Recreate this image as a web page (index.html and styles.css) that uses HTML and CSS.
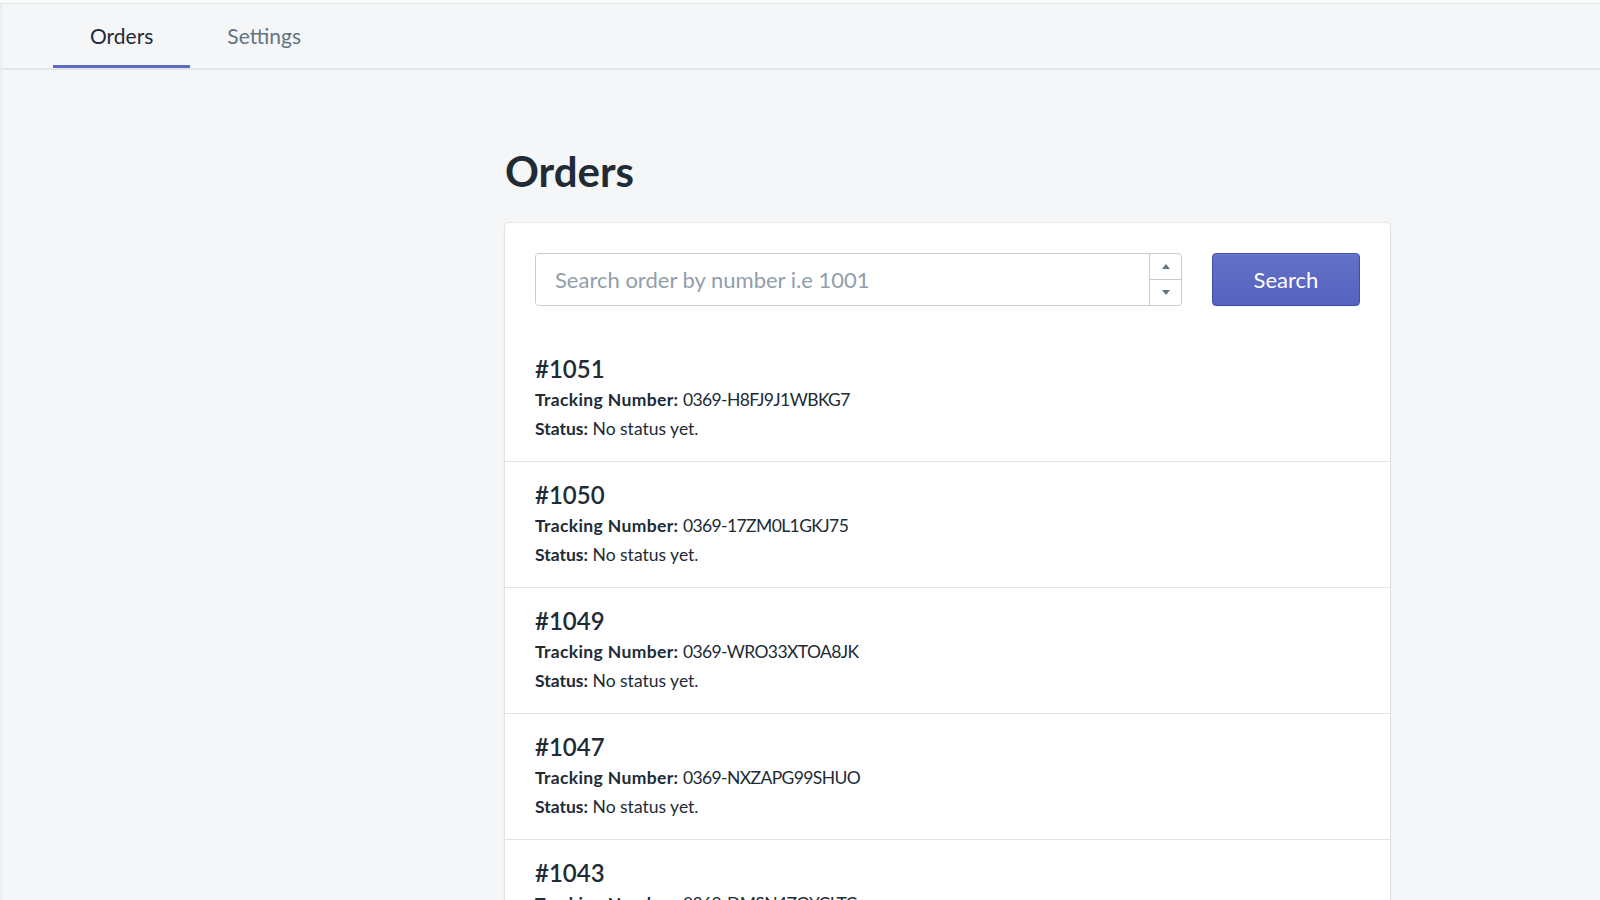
FILE: index.html
```html
<!DOCTYPE html>
<html lang="en">
<head>
<meta charset="utf-8">
<title>Orders</title>
<link rel="stylesheet" href="styles.css">
</head>
<body>
<div class="app">
  <nav class="tabs">
    <a class="tab tab-active">Orders</a>
    <a class="tab">Settings</a>
  </nav>
  <main class="page">
    <h1 class="page-title">Orders</h1>
    <section class="card">
      <div class="search-row">
        <div class="number-field">
          <input class="number-input" type="text" placeholder="Search order by number i.e 1001">
          <div class="spinner">
            <span class="spin-btn"><svg width="8" height="5" viewBox="0 0 8 5"><path d="M0 5 L4 0 L8 5 Z" fill="#637381"/></svg></span>
            <span class="spin-btn"><svg width="8" height="5" viewBox="0 0 8 5"><path d="M0 0 L4 5 L8 0 Z" fill="#637381"/></svg></span>
          </div>
        </div>
        <button class="btn-primary">Search</button>
      </div>
      <ul class="order-list">
        <li class="order">
          <div class="order-number">#1051</div>
          <div class="order-line"><b class="label-track">Tracking Number:</b> <span class="code">0369-H8FJ9J1WBKG7</span></div>
          <div class="order-line"><b>Status:</b> No status yet.</div>
        </li>
        <li class="order">
          <div class="order-number">#1050</div>
          <div class="order-line"><b class="label-track">Tracking Number:</b> <span class="code">0369-17ZM0L1GKJ75</span></div>
          <div class="order-line"><b>Status:</b> No status yet.</div>
        </li>
        <li class="order">
          <div class="order-number">#1049</div>
          <div class="order-line"><b class="label-track">Tracking Number:</b> <span class="code">0369-WRO33XTOA8JK</span></div>
          <div class="order-line"><b>Status:</b> No status yet.</div>
        </li>
        <li class="order">
          <div class="order-number">#1047</div>
          <div class="order-line"><b class="label-track">Tracking Number:</b> <span class="code">0369-NXZAPG99SHUO</span></div>
          <div class="order-line"><b>Status:</b> No status yet.</div>
        </li>
        <li class="order">
          <div class="order-number">#1043</div>
          <div class="order-line"><b class="label-track">Tracking Number:</b> <span class="code">0369-DMSN4ZOYCLTC</span></div>
          <div class="order-line"><b>Status:</b> No status yet.</div>
        </li>
      </ul>
    </section>
  </main>
</div>
</body>
</html>
```
FILE: styles.css
```css
* { box-sizing: border-box; }
html { background: #fafbfb; }
body {
  margin: 0;
  font-family: Lato, "Open Sans", sans-serif;
  color: #212b36;
  height: 900px;
  overflow: hidden;
}
.app {
  margin-top: 3px;
  border-top: 1px solid #e3e5e8;
  border-left: 2px solid #eceef0;
  background: #f4f6f8;
  min-height: 897px;
}
.tabs {
  display: flex;
  padding-left: 51px;
  height: 66px;
  border-bottom: 2px solid #e3e5e8;
}
.tab {
  display: block;
  height: 64px;
  line-height: 64px;
  padding: 0 37px;
  font-size: 21px;
  color: #637381;
  cursor: pointer;
}
.tab-active {
  color: #212b36;
  box-shadow: inset 0 -3px 0 #5c6ac4;
}
.page {
  padding: 75px 210px 0 503px;
}
.page-title {
  margin: 0 0 26px;
  font-size: 42px;
  line-height: 52px;
  font-weight: 700;
  color: #212b36;
}
.card {
  background: #fff;
  border-radius: 4px;
  box-shadow: 0 0 0 1px rgba(63,63,68,0.05), 0 1px 3px 0 rgba(63,63,68,0.15);
}
.search-row {
  display: flex;
  gap: 30px;
  padding: 30px;
}
.number-field {
  flex: 1;
  display: flex;
  height: 53px;
  border: 1px solid #c4cdd5;
  border-radius: 4px;
  overflow: hidden;
}
.number-input {
  flex: 1;
  border: 0;
  outline: none;
  padding: 0 19px;
  font-family: inherit;
  font-size: 22px;
  color: #212b36;
}
.number-input::placeholder { color: #919eab; }
.spinner {
  width: 32px;
  display: flex;
  flex-direction: column;
  border-left: 1px solid #c4cdd5;
}
.spin-btn {
  flex: 1;
  display: flex;
  align-items: center;
  justify-content: center;
}
.spin-btn + .spin-btn { border-top: 1px solid #c4cdd5; }
.btn-primary {
  width: 148px;
  height: 53px;
  border: 1px solid #3f4eae;
  border-radius: 4px;
  background: linear-gradient(180deg, #6371c7, #5563c1);
  box-shadow: inset 0 1px 0 0 #6f7bcb, 0 1px 0 0 rgba(22,29,37,0.05);
  color: #fff;
  font-family: inherit;
  font-size: 22px;
  cursor: pointer;
}
.order-list {
  list-style: none;
  margin: 0;
  padding: 0;
}
.order {
  padding: 17px 30px 18px;
}
.order + .order { border-top: 1px solid #dfe3e8; }
.order-number {
  font-size: 24px;
  line-height: 32px;
  font-weight: 600;
  color: #212b36;
}
.order-line {
  font-size: 17.5px;
  line-height: 29px;
  color: #212b36;
}
.order-line b { font-weight: 700; }
.label-track { letter-spacing: 0.35px; }
.code { letter-spacing: -0.6px; }
```
